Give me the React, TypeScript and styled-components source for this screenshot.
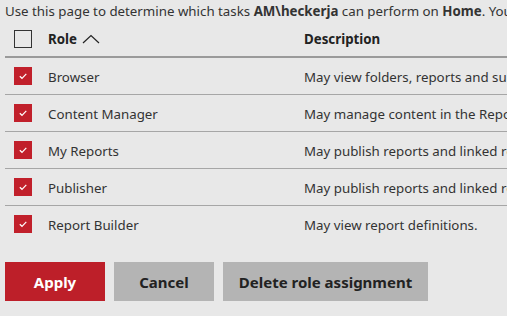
import React from 'react';
import styled, { createGlobalStyle } from 'styled-components';

const GlobalStyle = createGlobalStyle`
  html, body {
    margin: 0;
    padding: 0;
    background: #e8e8e8;
    overflow: hidden;
  }
  body {
    font-family: "Noto Sans", "Open Sans", sans-serif;
    font-size: 13.3px;
    color: #222;
  }
`;

const Page = styled.div`
  width: 507px;
  height: 316px;
  padding-left: 5px;
  box-sizing: border-box;
  overflow: hidden;
`;

const Intro = styled.div`
  height: 24px;
  line-height: 24px;
  white-space: nowrap;
  color: #333;
  margin-top: -1px;
  margin-bottom: -1px;
`;

const Table = styled.div`
  width: 700px;
`;

const Row = styled.div<{ $header?: boolean }>`
  display: grid;
  grid-template-columns: 43px 256px 1fr;
  align-items: center;
  height: ${({ $header }) => ($header ? '34px' : '36px')};
  border-bottom: ${({ $header }) => ($header ? '2px solid #9a9a9a' : '1px solid #a6a6a6')};
  &:last-child {
    border-bottom: none;
  }
`;

const CheckCell = styled.div`
  padding-left: 9px;
  display: flex;
  align-items: center;
`;

const Box = styled.div<{ $checked?: boolean }>`
  width: 18px;
  height: 18px;
  box-sizing: border-box;
  display: flex;
  align-items: center;
  justify-content: center;
  background: ${({ $checked }) => ($checked ? '#c1202b' : 'transparent')};
  border: ${({ $checked }) => ($checked ? 'none' : '1.5px solid #333')};
`;

const HeadText = styled.div`
  font-weight: 700;
  color: #222;
  display: flex;
  align-items: center;
  gap: 5px;
`;

const Cell = styled.div`
  color: #333;
  white-space: nowrap;
  padding-top: 1px;
`;

const Buttons = styled.div`
  display: flex;
  gap: 9px;
  margin-top: 20px;
`;

const Btn = styled.button<{ $primary?: boolean; $w: number }>`
  width: ${({ $w }) => $w}px;
  height: 39px;
  border: none;
  font-family: inherit;
  font-size: 15px;
  font-weight: 700;
  background: ${({ $primary }) => ($primary ? '#bd1f29' : '#b4b4b4')};
  color: ${({ $primary }) => ($primary ? '#fff' : '#222')};
  padding: 0;
`;

const Check = () => (
  <svg width="12" height="10" viewBox="0 0 12 10">
    <path d="M2.8 5.2 L5 7.3 L9.3 2.8" fill="none" stroke="#fff" strokeWidth="1.2" />
  </svg>
);

const Caret = () => (
  <svg width="18" height="10" viewBox="0 0 18 10">
    <path d="M1 9 L9 1.5 L17 9" fill="none" stroke="#222" strokeWidth="1.2" />
  </svg>
);

const roles = [
  ['Browser', 'May view folders, reports and subscribe to reports.'],
  ['Content Manager', 'May manage content in the Report Server.'],
  ['My Reports', 'May publish reports and linked reports; manage folders.'],
  ['Publisher', 'May publish reports and linked reports to the Report Server.'],
  ['Report Builder', 'May view report definitions.'],
];

export default function App() {
  return (
    <Page>
      <GlobalStyle />
      <Intro>
        Use this page to determine which tasks <b>AM\heckerja</b> can perform on <b>Home</b>. You can also
      </Intro>
      <Table>
        <Row $header>
          <CheckCell>
            <Box />
          </CheckCell>
          <HeadText>
            Role <Caret />
          </HeadText>
          <HeadText>Description</HeadText>
        </Row>
        {roles.map(([name, desc]) => (
          <Row key={name}>
            <CheckCell>
              <Box $checked>
                <Check />
              </Box>
            </CheckCell>
            <Cell>{name}</Cell>
            <Cell>{desc}</Cell>
          </Row>
        ))}
      </Table>
      <Buttons>
        <Btn $primary $w={100}>Apply</Btn>
        <Btn $w={100}>Cancel</Btn>
        <Btn $w={205}>Delete role assignment</Btn>
      </Buttons>
    </Page>
  );
}
